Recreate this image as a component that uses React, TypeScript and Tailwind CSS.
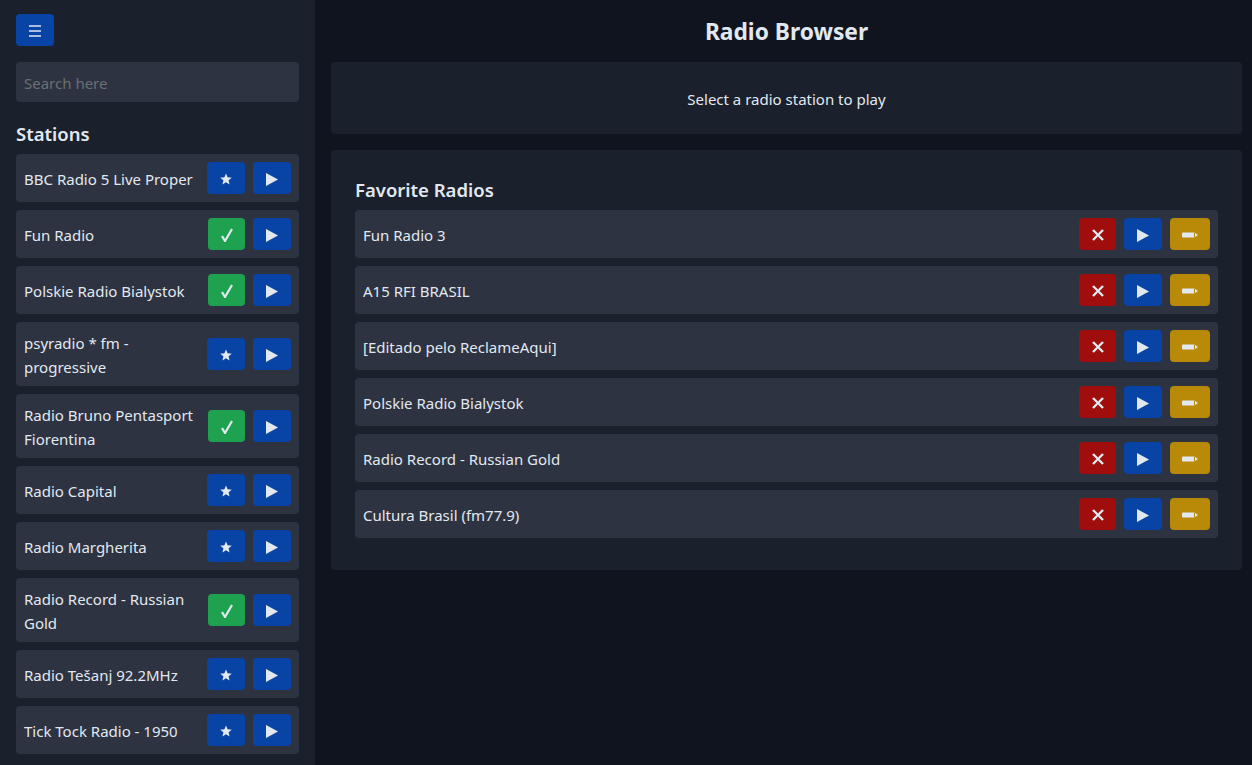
import React from 'react';

const font = "font-['Noto_Sans',sans-serif]";

const stations = [
  { name: 'BBC Radio 5 Live Proper', fav: false },
  { name: 'Fun Radio', fav: true },
  { name: 'Polskie Radio Bialystok', fav: true },
  { name: 'psyradio * fm - progressive', fav: false },
  { name: 'Radio Bruno Pentasport Fiorentina', fav: true },
  { name: 'Radio Capital', fav: false },
  { name: 'Radio Margherita', fav: false },
  { name: 'Radio Record - Russian Gold', fav: true },
  { name: 'Radio Tešanj 92.2MHz', fav: false },
  { name: 'Tick Tock Radio - 1950', fav: false },
];

const favorites = [
  'Fun Radio 3',
  'A15 RFI BRASIL',
  '[Editado pelo ReclameAqui]',
  'Polskie Radio Bialystok',
  'Radio Record - Russian Gold',
  'Cultura Brasil (fm77.9)',
];

const PlayIcon = () => (
  <svg width="12" height="13" viewBox="0 0 12 13"><path d="M0 0 L12 6.5 L0 13 Z" fill="#e2e8f0" /></svg>
);

const StarIcon = () => (
  <svg width="12" height="12" viewBox="0 0 24 24"><path d="M12 1 L15.2 8.6 L23.5 9.3 L17.2 14.7 L19.1 22.8 L12 18.5 L4.9 22.8 L6.8 14.7 L0.5 9.3 L8.8 8.6 Z" fill="#e2e8f0" /></svg>
);

const CheckIcon = () => (
  <svg width="12" height="14" viewBox="0 0 12 14"><path d="M1 8 L4 13 L11 1" fill="none" stroke="#e2e8f0" strokeWidth="2.2" /></svg>
);

const CloseIcon = () => (
  <svg width="12" height="12" viewBox="0 0 12 12"><path d="M1 1 L11 11 M11 1 L1 11" stroke="#e2e8f0" strokeWidth="2.4" /></svg>
);

const PencilIcon = () => (
  <svg width="16" height="6" viewBox="0 0 16 6"><path d="M1 0.5 H12.5 L16 3 L12.5 5.5 H1 Q0 5.5 0 4.5 V1.5 Q0 0.5 1 0.5 Z" fill="#e2e8f0" /><rect x="12" y="0.5" width="1" height="5" fill="#b98a08" /></svg>
);

const IconButton = ({ className, children }: { className: string; children: React.ReactNode }) => (
  <button className={`h-8 shrink-0 flex items-center justify-center rounded pt-0.5 ${className}`}>{children}</button>
);

export default function App() {
  return (
    <div className={`flex h-[765px] overflow-hidden bg-[#0f141f] text-[15px] text-[#e2e8f0] ${font}`}>
      <aside className="w-[315px] shrink-0 bg-[#1a202c] px-4 pt-3.5">
        <IconButton className="w-[38px] bg-[#0843a6]">
          <svg width="12" height="12" viewBox="0 0 12 12"><path d="M0 1 H12 M0 6 H12 M0 11 H12" stroke="#e2e8f0" strokeWidth="1.3" /></svg>
        </IconButton>
        <input
          placeholder="Search here"
          className="mt-4 block h-10 w-full rounded bg-[#2d3340] px-2 pt-0.5 text-[15px] outline-none placeholder:text-[#6b7075]"
        />
        <h2 className="mt-[18px] mb-1.5 text-[18.5px] leading-7 font-semibold">Stations</h2>
        <div className="flex flex-col gap-2">
          {stations.map((s) => (
            <div key={s.name} className="flex items-center gap-2 rounded bg-[#2d3340] p-2">
              <span className="-mb-px min-w-0 flex-1 pt-px leading-6">{s.name}</span>
              {s.fav ? (
                <IconButton className="w-[37px] bg-[#1fa24f]"><CheckIcon /></IconButton>
              ) : (
                <IconButton className="w-[38px] bg-[#0843a6]"><StarIcon /></IconButton>
              )}
              <IconButton className="w-[38px] bg-[#0843a6]"><PlayIcon /></IconButton>
            </div>
          ))}
        </div>
      </aside>
      <main className="min-w-0 flex-1 pt-4 pr-2.5 pl-4">
        <h1 className="mb-3.5 text-center text-[22.75px] leading-8 font-bold">Radio Browser</h1>
        <div className="flex h-[72px] items-center justify-center rounded bg-[#1a202c] pt-0.5">Select a radio station to play</div>
        <section className="mt-4 rounded bg-[#1a202c] px-6 pt-6 pb-8">
          <h2 className="mb-1 text-[18.5px] leading-8 font-semibold">Favorite Radios</h2>
          <div className="flex flex-col gap-2">
            {favorites.map((name) => (
              <div key={name} className="flex items-center gap-2 rounded bg-[#2d3340] p-2">
                <span className="-mb-px min-w-0 flex-1 pt-px leading-6">{name}</span>
                <IconButton className="w-[37px] bg-[#a00d0d]"><CloseIcon /></IconButton>
                <IconButton className="w-[38px] bg-[#0843a6]"><PlayIcon /></IconButton>
                <IconButton className="w-10 bg-[#b98a08]"><PencilIcon /></IconButton>
              </div>
            ))}
          </div>
        </section>
      </main>
    </div>
  );
}
